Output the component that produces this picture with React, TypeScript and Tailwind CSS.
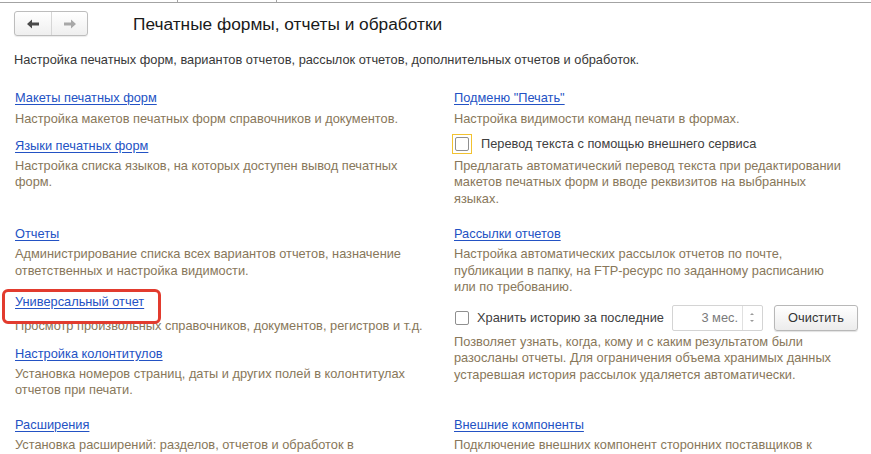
import React from 'react'

const linkCls = 'text-[12.8px] leading-[17px] text-[#2352c4] underline underline-offset-[2px] decoration-[#2352c4] whitespace-nowrap'
const descCls = 'text-[12.8px] leading-[16.5px] text-[#88775a] whitespace-nowrap'

const Desc = ({ lines, className = '' }: { lines: string[]; className?: string }) => (
  <div className={`${descCls} ${className}`}>
    {lines.map((l) => (
      <div key={l}>{l}</div>
    ))}
  </div>
)

const Arrow = ({ color, flip }: { color: string; flip?: boolean }) => (
  <svg width="12" height="10" viewBox="0 0 12 10" className={flip ? 'rotate-180' : ''}>
    <path d="M0 5 L5 0.5 L5 3.5 L12 3.5 L12 6.5 L5 6.5 L5 9.5 Z" fill={color} />
  </svg>
)

const App = () => {
  return (
    <div className="relative w-[871px] h-[454px] overflow-hidden bg-white font-['Liberation_Sans',Arial,sans-serif]">
      {/* top tabs remnant */}
      <div className="flex h-[3px] border-b border-[#a3a3a3]">
        <div className="w-[178px] border-r border-[#a3a3a3]" />
        <div className="w-[99px] border-r border-[#a3a3a3]" />
      </div>

      {/* header */}
      <div className="flex items-center pl-[14px] mt-[8px] h-[25px]">
        <div className="flex h-[25px] w-[74px] rounded-[3px] border border-[#bdbdbd] bg-gradient-to-b from-white to-[#efefef] shadow-[0_1px_1px_rgba(0,0,0,0.08)]">
          <div className="flex w-[37px] items-center justify-center border-r border-[#d6d6d6]">
            <Arrow color="#4a4a4a" />
          </div>
          <div className="flex flex-1 items-center justify-center">
            <Arrow color="#a8a8a8" flip />
          </div>
        </div>
        <div className="ml-[45px] text-[17.3px] leading-[22px] text-[#1a1a1a]">Печатные формы, отчеты и обработки</div>
      </div>

      <div className="mt-[15px] pl-[14px] text-[12.8px] leading-[17px] text-[#383838]">
        Настройка печатных форм, вариантов отчетов, рассылок отчетов, дополнительных отчетов и обработок.
      </div>

      {/* content grid */}
      <div className="mt-[21px] grid grid-cols-[454px_1fr] grid-rows-[136px_191px_auto]">
        {/* row 1 left */}
        <div className="pl-[15px] flex flex-col items-start">
          <a className={linkCls}>Макеты печатных форм</a>
          <Desc className="mt-[5px]" lines={['Настройка макетов печатных форм справочников и документов.']} />
          <a className={`${linkCls} mt-[9px]`}>Языки печатных форм</a>
          <Desc className="mt-[4px]" lines={['Настройка списка языков, на которых доступен вывод печатных', 'форм.']} />
        </div>
        {/* row 1 right */}
        <div className="flex flex-col items-start">
          <a className={linkCls}>Подменю "Печать"</a>
          <Desc className="mt-[5px]" lines={['Настройка видимости команд печати в формах.']} />
          <div className="mt-[6px] flex h-[20px] items-center">
            <div className="ml-[-2px] flex h-[20px] w-[20px] items-center justify-center border border-[#f2c230]">
              <div className="h-[14px] w-[14px] rounded-[2px] border border-[#8f8f8f] bg-white" />
            </div>
            <span className="ml-[9px] text-[12.8px] leading-[17px] text-[#404040]">Перевод текста с помощью внешнего сервиса</span>
          </div>
          <Desc
            className="mt-[4px]"
            lines={[
              'Предлагать автоматический перевод текста при редактировании',
              'макетов печатных форм и вводе реквизитов на выбранных',
              'языках.',
            ]}
          />
        </div>

        {/* row 2 left */}
        <div className="pl-[15px] flex flex-col items-start">
          <a className={linkCls}>Отчеты</a>
          <Desc
            className="mt-[4px]"
            lines={['Администрирование списка всех вариантов отчетов, назначение', 'ответственных и настройка видимости.']}
          />
          <a className={`${linkCls} mt-[14px]`}>Универсальный отчет</a>
          <Desc className="mt-[8px]" lines={['Просмотр произвольных справочников, документов, регистров и т.д.']} />
          <a className={`${linkCls} mt-[10px]`}>Настройка колонтитулов</a>
          <Desc
            className="mt-[4px]"
            lines={['Установка номеров страниц, даты и других полей в колонтитулах', 'отчетов при печати.']}
          />
        </div>
        {/* row 2 right */}
        <div className="flex flex-col items-start">
          <a className={linkCls}>Рассылки отчетов</a>
          <Desc
            className="mt-[4px]"
            lines={[
              'Настройка автоматических рассылок отчетов по почте,',
              'публикации в папку, на FTP-ресурс по заданному расписанию',
              'или по требованию.',
            ]}
          />
          <div className="mt-[9px] flex h-[26px] items-center">
            <div className="ml-[1px] h-[14px] w-[14px] rounded-[2px] border border-[#8f8f8f] bg-white" />
            <span className="ml-[8px] text-[12.8px] leading-[17px] text-[#404040]">Хранить историю за последние</span>
            <div className="ml-[8px] flex h-[26px] w-[91px] rounded-[2px] border border-[#d4d4d4] bg-white">
              <div className="flex flex-1 items-center justify-end pr-[4px] text-[12.8px] text-[#7a7a7a]">3 мес.</div>
              <div className="flex w-[20px] flex-col items-center justify-center gap-[5px] border-l border-[#e0e0e0]">
                <div className="h-0 w-0 border-x-[2px] border-b-[2px] border-x-transparent border-b-[#9a9a9a]" />
                <div className="h-0 w-0 border-x-[2px] border-t-[2px] border-x-transparent border-t-[#9a9a9a]" />
              </div>
            </div>
            <button className="ml-[11px] h-[26px] w-[84px] rounded-[3px] border border-[#b8b8b8] bg-gradient-to-b from-white to-[#ececec] text-[12.8px] text-[#333] shadow-[0_1px_1px_rgba(0,0,0,0.12)]">
              Очистить
            </button>
          </div>
          <Desc
            className="mt-[3px]"
            lines={[
              'Позволяет узнать, когда, кому и с каким результатом были',
              'разосланы отчеты. Для ограничения объема хранимых данных',
              'устаревшая история рассылок удаляется автоматически.',
            ]}
          />
        </div>

        {/* row 3 */}
        <div className="pl-[15px] flex flex-col items-start">
          <a className={linkCls}>Расширения</a>
          <Desc className="mt-[4px]" lines={['Установка расширений: разделов, отчетов и обработок в']} />
        </div>
        <div className="flex flex-col items-start">
          <a className={linkCls}>Внешние компоненты</a>
          <Desc className="mt-[4px]" lines={['Подключение внешних компонент сторонних поставщиков к']} />
        </div>
      </div>

      {/* highlight */}
      <div className="absolute left-[2px] top-[289px] h-[35px] w-[159px] rounded-[6px] border-[3px] border-[#e23b2e]" />
    </div>
  )
}

export default App
